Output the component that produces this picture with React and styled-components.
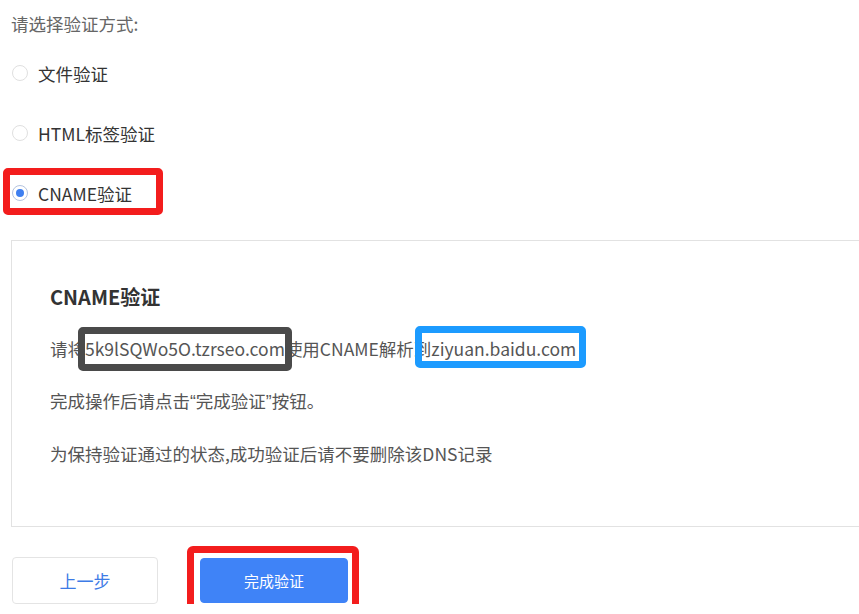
import styled, { createGlobalStyle } from "styled-components";

const GlobalStyle = createGlobalStyle`
  html, body {
    margin: 0;
    padding: 0;
    background: #fff;
    overflow: hidden;
  }
  body {
    font-family: "Noto Sans CJK SC", "Open Sans", sans-serif;
    font-size: 17.5px;
    color: #444;
  }
`;

const Page = styled.div`
  padding: 12px 0 0 11px;
  width: 900px;
`;

const Prompt = styled.div`
  color: #666;
  line-height: 24px;
  margin-bottom: 7px;
`;

const OptionList = styled.div`
  display: flex;
  flex-direction: column;
  align-items: flex-start;
`;

const Option = styled.label`
  position: relative;
  display: flex;
  align-items: center;
  height: 60px;
  color: #333;
  white-space: nowrap;
  cursor: pointer;

  ${props => props.marked ? `
    &::after {
      content: "";
      position: absolute;
      left: -8px;
      width: 160px;
      top: 5px;
      bottom: 8px;
      border: 7px solid #f31d1d;
      border-radius: 5px;
      box-sizing: border-box;
      pointer-events: none;
    }
  ` : null}
`;

const Radio = styled.span`
  width: 16px;
  height: 16px;
  margin: 0 10px 0 1px;
  border-radius: 50%;
  border: 1px solid ${props => props.checked ? "#b4c3df" : "#e0e0e0"};
  box-sizing: border-box;
  display: flex;
  align-items: center;
  justify-content: center;
  background: #fff;

  &::before {
    content: "";
    width: 8px;
    height: 8px;
    border-radius: 50%;
    background: ${props => props.checked ? "#3e7ff0" : "transparent"};
  }
`;

const Panel = styled.div`
  margin-top: 17px;
  border: 1px solid #e2e2e2;
  border-right: none;
  padding: 30px 0 46px 38px;
`;

const PanelTitle = styled.h3`
  margin: 0;
  font-size: 20px;
  font-weight: 700;
  color: #333;
  line-height: 52px;
`;

const Line = styled.p`
  margin: 0;
  line-height: 52px;
  color: #555;
  white-space: nowrap;
`;

const Quote = styled.span`
  font-family: "Liberation Sans", sans-serif;
`;

const Mark = styled.span`
  position: relative;

  &::after {
    content: "";
    position: absolute;
    left: ${props => props.tone === "dark" ? "-7px" : "-16px"};
    right: ${props => props.tone === "dark" ? "-7px" : "-10px"};
    top: ${props => props.tone === "dark" ? "-9px" : "-10px"};
    bottom: ${props => props.tone === "dark" ? "-10px" : "-7px"};
    border: 7px solid ${props => props.tone === "dark" ? "#4a4a4a" : "#1c9bff"};
    border-radius: 5px;
    pointer-events: none;
  }
`;

const Actions = styled.div`
  display: flex;
  align-items: center;
  gap: 42px;
  margin-top: 30px;
  padding-left: 1px;
`;

const Button = styled.button`
  position: relative;
  width: ${props => props.primary ? "148px" : "146px"};
  height: ${props => props.primary ? "45px" : "47px"};
  border-radius: 4px;
  font-family: "Noto Sans CJK SC", "Open Sans", sans-serif;
  font-size: ${props => props.primary ? "15px" : "17px"};
  border: 1px solid ${props => props.primary ? "#3f83f7" : "#e4e4e4"};
  background: ${props => props.primary ? "#3f83f7" : "#fff"};
  color: ${props => props.primary ? "#fff" : "#3d7be6"};
  cursor: pointer;

  ${props => props.marked ? `
    &::after {
      content: "";
      position: absolute;
      left: -14px;
      right: -12px;
      top: -13px;
      bottom: -14px;
      border: 7px solid #f31d1d;
      border-radius: 6px;
      pointer-events: none;
    }
  ` : null}
`;

const options = [
  { label: "文件验证" },
  { label: "HTML标签验证" },
  { label: "CNAME验证", checked: true },
];

export default function App() {
  return (
    <>
      <GlobalStyle />
      <Page>
        <Prompt>请选择验证方式:</Prompt>
        <OptionList>
          {options.map(o => (
            <Option key={o.label} marked={o.checked}>
              <Radio checked={o.checked} />
              {o.label}
            </Option>
          ))}
        </OptionList>

        <Panel>
          <PanelTitle>CNAME验证</PanelTitle>
          <Line>
            请将<Mark tone="dark">5k9lSQWo5O.tzrseo.com</Mark>使用CNAME解析到<Mark tone="blue">ziyuan.baidu.com</Mark>
          </Line>
          <Line>完成操作后请点击<Quote>“</Quote>完成验证<Quote>”</Quote>按钮。</Line>
          <Line>为保持验证通过的状态,成功验证后请不要删除该DNS记录</Line>
        </Panel>

        <Actions>
          <Button>上一步</Button>
          <Button primary marked>完成验证</Button>
        </Actions>
      </Page>
    </>
  );
}
